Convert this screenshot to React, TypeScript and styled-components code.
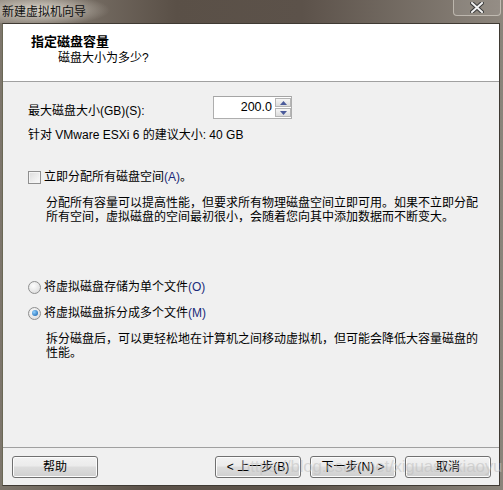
import styled, { createGlobalStyle } from 'styled-components';

const GlobalStyle = createGlobalStyle`
  html, body {
    margin: 0;
    padding: 0;
    background: #5a5048;
  }
  * {
    box-sizing: border-box;
  }
`;

const UI_FONT = `Tahoma, "Liberation Sans", "Noto Sans CJK SC", sans-serif`;

const Window = styled.div`
  position: relative;
  width: 503px;
  height: 490px;
  display: flex;
  flex-direction: column;
  font-family: ${UI_FONT};
  font-size: 12px;
  color: #000;
  overflow: hidden;
  background: linear-gradient(90deg, #7d766c 0%, #5b5148 30%, #5d544b 60%, #8a847b 100%);
`;

const TitleBar = styled.div`
  height: 23px;
  flex: none;
  display: flex;
  align-items: flex-start;
  justify-content: space-between;
  background:
    radial-gradient(ellipse 70px 16px at 40px 10px, rgba(235, 230, 220, 0.85), rgba(235, 230, 220, 0) 100%),
    linear-gradient(90deg, #8e867c 0%, #5a5047 35%, #5c524a 60%, #8c857c 100%);
`;

const Title = styled.span`
  padding: 3px 0 0 2px;
  font-size: 12px;
  line-height: 16px;
  color: #111;
  font-family: "Noto Sans CJK SC", sans-serif;
`;

const CloseButton = styled.div`
  width: 48px;
  height: 16px;
  margin-right: 2px;
  border: 1px solid rgba(230, 225, 215, 0.55);
  border-top: none;
  border-radius: 0 0 4px 4px;
  display: flex;
  align-items: center;
  justify-content: center;
  background: rgba(255, 255, 255, 0.08);
  svg {
    display: block;
  }
`;

const Frame = styled.div`
  flex: 1;
  display: flex;
  flex-direction: column;
  margin: 0 3px 4px 2px;
  border: 1px solid #3f3a33;
  border-left-color: #6a6855;
  background: #f0f0f0;
`;

const Header = styled.div`
  height: 58px;
  flex: none;
  background: #fff;
  border-bottom: 1px solid #a0a0a0;
  padding: 9px 0 0 28px;
`;

const HeaderTitle = styled.div`
  font-weight: bold;
  font-size: 13px;
  line-height: 17px;
`;

const HeaderSub = styled.div`
  padding-left: 27px;
  line-height: 17px;
`;

const Body = styled.div`
  flex: 1;
  padding: 14px 0 0 25px;
  display: flex;
  flex-direction: column;
`;

const SizeRow = styled.div`
  display: flex;
  align-items: center;
  height: 23px;
`;

const SizeLabel = styled.span`
  width: 185px;
  padding-top: 4px;
`;

const SpinBox = styled.div`
  display: flex;
  width: 79px;
  height: 23px;
  border: 1px solid #aeaeae;
  border-top-color: #a5a5a5;
  background: #fff;
`;

const SpinInput = styled.div`
  flex: 1;
  text-align: right;
  padding-right: 3px;
  line-height: 21px;
  font-size: 12.5px;
`;

const SpinButtons = styled.div`
  width: 16px;
  display: flex;
  flex-direction: column;
  gap: 1px;
  padding: 1px 0 1px 0;
`;

const SpinButton = styled.div`
  flex: 1;
  border: 1px solid #b5b5b5;
  background: linear-gradient(#f6f6f6, #dcdcdc);
  display: flex;
  align-items: center;
  justify-content: center;
`;

const Hint = styled.div`
  margin-top: 6px;
  line-height: 20px;
`;

const OptionRow = styled.label<{ $top: number }>`
  display: flex;
  align-items: center;
  gap: 3px;
  margin-top: ${(p) => p.$top}px;
  line-height: 16px;
`;

const CheckBox = styled.span`
  width: 13px;
  height: 13px;
  border: 1px solid #8f8f8f;
  background: linear-gradient(135deg, #dcdcdc, #fbfbfb);
  box-shadow: inset 0 0 0 1px #f4f4f4;
`;

const Radio = styled.span<{ $checked?: boolean }>`
  width: 13px;
  height: 13px;
  border-radius: 50%;
  border: 1px solid #8e8f8f;
  background: radial-gradient(circle at 40% 35%, #fdfdfd, #d6d6d6);
  display: flex;
  align-items: center;
  justify-content: center;
  &::after {
    content: '';
    display: ${(p) => (p.$checked ? 'block' : 'none')};
    width: 6px;
    height: 6px;
    border-radius: 50%;
    background: radial-gradient(circle at 35% 35%, #8fd0ff, #0c5aa8);
  }
`;

const Mnemonic = styled.span`
  color: #1a2a7a;
`;

const Description = styled.div<{ $top: number }>`
  margin-top: ${(p) => p.$top}px;
  margin-left: 18px;
  white-space: nowrap;
  line-height: 13.5px;
`;

const Footer = styled.div`
  height: 38px;
  flex: none;
  border-top: 1px solid #a0a0a0;
  display: flex;
  align-items: center;
  padding: 1px 8px 0 9px;
`;

const Button = styled.div`
  width: 86px;
  height: 22px;
  border: 1px solid #707070;
  border-radius: 3px;
  background: linear-gradient(#f2f2f2 0%, #ebebeb 45%, #dddddd 50%, #cfcfcf 100%);
  box-shadow: inset 0 0 0 1px #fcfcfc;
  display: flex;
  align-items: center;
  justify-content: center;
  line-height: 14px;
`;

const Spacer = styled.div`
  flex: 1;
`;

const ButtonGroup = styled.div`
  display: flex;
  gap: 9px;
`;

const Watermark = styled.div`
  position: absolute;
  left: 241px;
  top: 457px;
  font-family: "Liberation Sans", Arial, sans-serif;
  font-size: 17px;
  letter-spacing: -0.2px;
  color: rgba(190, 190, 190, 0.55);
  pointer-events: none;
  white-space: nowrap;
`;

const Arrow = ({ up }: { up?: boolean }) => (
  <svg width="7" height="4" viewBox="0 0 7 4">
    <path d={up ? 'M0 4 L3.5 0 L7 4 Z' : 'M0 0 L3.5 4 L7 0 Z'} fill="#4a5a9a" />
  </svg>
);

export default function App() {
  return (
    <>
      <GlobalStyle />
      <Window>
        <TitleBar>
          <Title>新建虚拟机向导</Title>
          <CloseButton>
            <svg width="14" height="11" viewBox="0 0 14 11">
              <path d="M2 1 L12 10 M12 1 L2 10" stroke="#3a3a3a" strokeWidth="4" strokeLinecap="square" />
              <path d="M2 1 L12 10 M12 1 L2 10" stroke="#f2f2f2" strokeWidth="2" strokeLinecap="square" />
            </svg>
          </CloseButton>
        </TitleBar>
        <Frame>
          <Header>
            <HeaderTitle>指定磁盘容量</HeaderTitle>
            <HeaderSub>磁盘大小为多少?</HeaderSub>
          </Header>
          <Body>
            <SizeRow>
              <SizeLabel>最大磁盘大小(GB)(S):</SizeLabel>
              <SpinBox>
                <SpinInput>200.0</SpinInput>
                <SpinButtons>
                  <SpinButton>
                    <Arrow up />
                  </SpinButton>
                  <SpinButton>
                    <Arrow />
                  </SpinButton>
                </SpinButtons>
              </SpinBox>
            </SizeRow>
            <Hint>针对 VMware ESXi 6 的建议大小: 40 GB</Hint>
            <OptionRow $top={24}>
              <CheckBox />
              <span>
                立即分配所有磁盘空间<Mnemonic>(A)</Mnemonic>。
              </span>
            </OptionRow>
            <Description $top={12}>
              分配所有容量可以提高性能，但要求所有物理磁盘空间立即可用。如果不立即分配
              <br />
              所有空间，虚拟磁盘的空间最初很小，会随着您向其中添加数据而不断变大。
            </Description>
            <OptionRow $top={55}>
              <Radio />
              <span>
                将虚拟磁盘存储为单个文件<Mnemonic>(O)</Mnemonic>
              </span>
            </OptionRow>
            <OptionRow $top={10}>
              <Radio $checked />
              <span>
                将虚拟磁盘拆分成多个文件<Mnemonic>(M)</Mnemonic>
              </span>
            </OptionRow>
            <Description $top={12}>
              拆分磁盘后，可以更轻松地在计算机之间移动虚拟机，但可能会降低大容量磁盘的
              <br />
              性能。
            </Description>
          </Body>
          <Footer>
            <Button>帮助</Button>
            <Spacer />
            <ButtonGroup>
              <Button>&lt; 上一步(B)</Button>
              <Button>下一步(N) &gt;</Button>
              <Button>取消</Button>
            </ButtonGroup>
          </Footer>
        </Frame>
        <Watermark>https://blog.csdn.net/xiguashixiaoyu</Watermark>
      </Window>
    </>
  );
}
